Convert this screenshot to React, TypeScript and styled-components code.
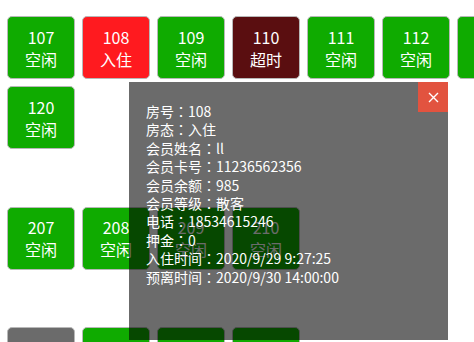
import styled, { createGlobalStyle } from "styled-components";

const GlobalStyle = createGlobalStyle`
  html, body {
    margin: 0;
    padding: 0;
    background: #ffffff;
    overflow: hidden;
  }
  body {
    font-family: "Noto Sans CJK SC", "Noto Sans", sans-serif;
  }
`;

type Status = "free" | "live" | "over" | "dirty";

const statusColor: Record<Status, string> = {
  free: "#0fab00",
  live: "#ff1a1f",
  over: "#5a0e10",
  dirty: "#6b6b6b",
};

const statusText: Record<Status, string> = {
  free: "空闲",
  live: "入住",
  over: "超时",
  dirty: "脏房",
};

const Page = styled.div`
  width: 474px;
  height: 342px;
  overflow: hidden;
  position: relative;
`;

// the room board is scrolled sideways, the first column is cut off
const Board = styled.div`
  margin-left: -68px;
  padding-top: 16px;
  display: flex;
  flex-direction: column;
  gap: 57.5px;
`;

const Floor = styled.div`
  display: flex;
  flex-direction: column;
  gap: 7px;
`;

const Row = styled.div`
  display: flex;
  gap: 7px;
  flex-wrap: nowrap;
`;

const Room = styled.div<{ $status: Status }>`
  flex: 0 0 68px;
  width: 68px;
  height: 63px;
  box-sizing: border-box;
  border: 1px solid #b8b8b8;
  border-radius: 5px;
  background: ${(p) => statusColor[p.$status]};
  color: #ffffff;
  display: flex;
  flex-direction: column;
  align-items: center;
  justify-content: center;
  font-size: 16px;
  line-height: 22px;
`;

const Layer = styled.div`
  position: absolute;
  left: 129px;
  top: 82px;
  width: 319px;
  height: 258px;
  box-sizing: border-box;
  padding: 20px 0 0 17px;
  background: rgba(0, 0, 0, 0.58);
  color: #ffffff;
  font-size: 14px;
  line-height: 18.4px;
`;

const Close = styled.button`
  position: absolute;
  top: 0;
  right: 0;
  width: 30px;
  height: 30px;
  border: 0;
  padding: 0;
  background: #e2533f;
  display: flex;
  align-items: center;
  justify-content: center;
  cursor: pointer;
`;

const Line = styled.div`
  white-space: nowrap;
`;

// centred full-width colon, like the original font draws it
const Colon = styled.span`
  font-family: "Noto Sans CJK JP", sans-serif;
`;

type RoomData = { no: number; status: Status };

const r = (no: number, status: Status = "free"): RoomData => ({ no, status });

const floors: RoomData[][][] = [
  [
    [r(106), r(107), r(108, "live"), r(109), r(110, "over"), r(111), r(112), r(113)],
    [r(119), r(120)],
  ],
  [[r(206), r(207), r(208), r(209), r(210)]],
  [[r(306), r(307, "dirty"), r(308), r(309), r(310)]],
];

const info: [string, string][] = [
  ["房号", "108"],
  ["房态", "入住"],
  ["会员姓名", "ll"],
  ["会员卡号", "11236562356"],
  ["会员余额", "985"],
  ["会员等级", "散客"],
  ["电话", "18534615246"],
  ["押金", "0"],
  ["入住时间", "2020/9/29 9:27:25"],
  ["预离时间", "2020/9/30 14:00:00"],
];

export default function App() {
  return (
    <Page>
      <GlobalStyle />
      <Board>
        {floors.map((rows, i) => (
          <Floor key={i}>
            {rows.map((row, j) => (
              <Row key={j}>
                {row.map((room) => (
                  <Room key={room.no} $status={room.status}>
                    <span>{room.no}</span>
                    <span>{statusText[room.status]}</span>
                  </Room>
                ))}
              </Row>
            ))}
          </Floor>
        ))}
      </Board>
      <Layer>
        <Close aria-label="关闭">
          <svg width="11" height="11" viewBox="0 0 11 11">
            <path d="M1 1L10 10M10 1L1 10" stroke="#fff" strokeWidth="1.4" />
          </svg>
        </Close>
        {info.map(([label, value]) => (
          <Line key={label}>
            {label}
            <Colon>：</Colon>
            {value}
          </Line>
        ))}
      </Layer>
    </Page>
  );
}
